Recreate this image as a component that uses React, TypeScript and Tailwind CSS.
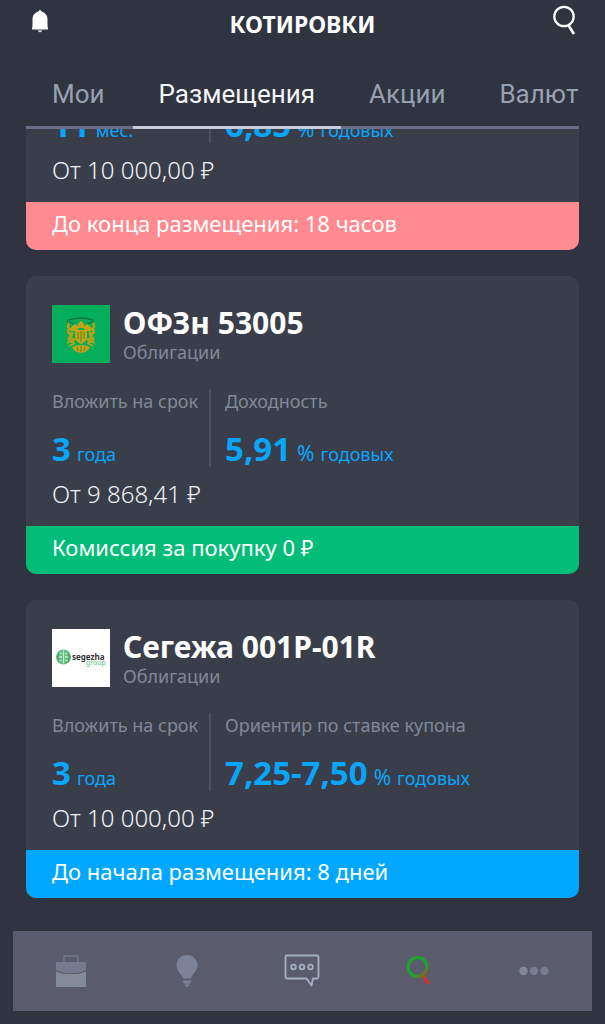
import type { ReactNode } from "react";

type Metric = { label?: string; value: string; percent?: boolean; unit: string };

type Placement = {
  id: string;
  logo?: ReactNode;
  title?: string;
  kind?: string;
  metrics: [Metric, Metric];
  price: string;
  banner: string;
  bannerColor: string;
};

function EagleLogo() {
  return (
    <svg viewBox="0 0 58 58" className="h-[58px] w-[58px] shrink-0" aria-hidden="true">
      <rect width="58" height="58" fill="#05ae5b" />
      <path d="M15 15.500 Q29 10.500 42 15.500 M15 16.500l7 2.500M42 16.500l-7 2.500" fill="none" stroke="#176c3d" strokeWidth="1.300" />
      <g fill="none" stroke="#b8a018" strokeWidth="2.400">
        <path d="M17 18c-2 3-1 6 3 7M18 23c-3 3-2 6 3 7M21 27c-4 3-3 7 2 8M17 32c-1 3 1 5 5 5" />
        <path d="M41 18c2 3 1 6-3 7M40 23c3 3 2 6-3 7M37 27c4 3 3 7-2 8M41 32c1 3-1 5-5 5" />
        <path d="M15 38l5-2M17 41l6-3M43 38l-5-2M41 41l-6-3" strokeWidth="1.800" />
      </g>
      <g fill="#c2a414">
        <path d="M26 19l3-3.500 3 3.500v4h-6z" />
        <path d="M19 22l4-3 4 3-2 4h-5z" />
        <path d="M39 22l-4-3-4 3 2 4h5z" />
        <path d="M23 25h12v8q-1 4-6 6-5-2-6-6z" />
        <path d="M20 42q9-4 18 0-2 5-9 6-7-1-9-6z" />
      </g>
      <path d="M26 27v7M29 26v11M32 27v7M25 42l1 4M29 41v6M33 42l-1 4" stroke="#5d8526" strokeWidth="1" />
    </svg>
  );
}

function SegezhaLogo() {
  return (
    <svg viewBox="0 0 58 58" className="h-[58px] w-[58px] shrink-0" aria-hidden="true">
      <rect width="58" height="58" fill="#ffffff" />
      <circle cx="11.500" cy="28" r="7.500" fill="#5fbd7f" />
      <path d="M11.500 21.500v13M7 24l3 1M7 28h3M7 32l3-1M16 24l-3 1M16 28h-3M16 32l-3-1" stroke="#c9edd3" strokeWidth="1.300" />
      <path d="M7 23q-3 5 0 10M16 23q3 5 0 10" fill="none" stroke="#3b9c5d" strokeWidth="1" />
      <text x="20" y="31" fontFamily="Noto Sans, sans-serif" fontSize="8" fontWeight="700" fill="#333333">segezha</text>
      <text x="34" y="36" fontFamily="Noto Sans, sans-serif" fontSize="7" fill="#65bd83">group</text>
    </svg>
  );
}

const placements: Placement[] = [
  {
    id: "ending",
    metrics: [
      { value: "11", unit: "мес." },
      { value: "6,85", percent: true, unit: "годовых" },
    ],
    price: "От 10 000,00 ₽",
    banner: "До конца размещения: 18 часов",
    bannerColor: "bg-[#ff8a8f]",
  },
  {
    id: "ofz",
    logo: <EagleLogo />,
    title: "ОФЗн 53005",
    kind: "Облигации",
    metrics: [
      { label: "Вложить на срок", value: "3", unit: "года" },
      { label: "Доходность", value: "5,91", percent: true, unit: "годовых" },
    ],
    price: "От 9 868,41 ₽",
    banner: "Комиссия за покупку 0 ₽",
    bannerColor: "bg-[#02bd77]",
  },
  {
    id: "segezha",
    logo: <SegezhaLogo />,
    title: "Сегежа 001P-01R",
    kind: "Облигации",
    metrics: [
      { label: "Вложить на срок", value: "3", unit: "года" },
      { label: "Ориентир по ставке купона", value: "7,25-7,50", percent: true, unit: "годовых" },
    ],
    price: "От 10 000,00 ₽",
    banner: "До начала размещения: 8 дней",
    bannerColor: "bg-[#02a8ff]",
  },
];

function MetricView({ metric }: { metric: Metric }) {
  return (
    <div className="flex h-[78px] flex-col justify-between whitespace-nowrap">
      <p className="h-6 text-lg leading-6 text-[#81889a]">{metric.label}</p>
      <p className="flex h-[38px] items-baseline gap-1.5 leading-10 text-[#08a6fb]">
        <span className="text-[33px] font-bold">{metric.value}</span>
        {metric.percent && <span className="text-[21px]">%</span>}
        <span className="text-lg leading-10">{metric.unit}</span>
      </p>
    </div>
  );
}

function PlacementCard({ item }: { item: Placement }) {
  return (
    <article className="overflow-hidden rounded-[10px] bg-[#3a3e4b]">
      {item.title && (
        <div className="flex gap-[13px] px-[26px] pt-[29px] pb-[26px]">
          {item.logo}
          <div className="h-[58px] min-w-0 whitespace-nowrap">
            <h2 className="text-[30px] leading-9 font-bold text-white">{item.title}</h2>
            <p className="text-lg leading-[22px] text-[#81889a]">{item.kind}</p>
          </div>
        </div>
      )}
      <div className="flex px-[26px]">
        <div className="w-[159px] shrink-0 border-r-2 border-[#4b5060]">
          <MetricView metric={item.metrics[0]} />
        </div>
        <div className="pl-[14px]">
          <MetricView metric={item.metrics[1]} />
        </div>
      </div>
      <p className="px-[26px] pt-[11px] pb-4 text-2xl leading-8 font-light text-[#f0f1f6]">{item.price}</p>
      <p className={`px-[26px] pt-[5px] pb-[11px] text-[22px] leading-8 text-white ${item.bannerColor}`}>{item.banner}</p>
    </article>
  );
}

function SearchIcon() {
  return (
    <svg viewBox="0 0 24 32" className="h-8 w-6" fill="none" stroke="white" strokeWidth="2.200" aria-hidden="true">
      <circle cx="11" cy="11.500" r="9.700" />
      <path d="M15.500 20.500l5.500 8.500" strokeWidth="2.600" />
    </svg>
  );
}

function BriefcaseIcon() {
  return (
    <svg viewBox="0 0 30 34" className="h-[34px] w-[30px]" aria-hidden="true">
      <path d="M8 8V2h14v6" fill="none" stroke="#717588" strokeWidth="1.500" />
      <path d="M0 8h30v8q-6 3-10 3H10q-4 0-10-3z" fill="#757a8e" />
      <path d="M0 17.500q6 2.500 10 2.500h10q4 0 10-2.500V33H0z" fill="#858a9b" />
    </svg>
  );
}

function BulbIcon() {
  return (
    <svg viewBox="0 0 22 34" className="h-[34px] w-[22px]" fill="#7c8398" aria-hidden="true">
      <path d="M11 1c6 0 10.500 4.500 10.500 10.500 0 6-5.500 8-6.500 13H7C6 19.500.500 17.500.500 11.500.500 5.500 5 1 11 1z" />
      <path d="M6.500 26.500h9l-1 3h-7zM8.500 30.500h5l-2.500 3z" />
    </svg>
  );
}

function ChatIcon() {
  return (
    <svg viewBox="0 0 36 34" className="h-[34px] w-9" fill="none" stroke="#a5afc4" strokeWidth="1.800" strokeLinejoin="round" aria-hidden="true">
      <path d="M3 1.500h30q1.500 0 1.500 1.500v20q0 1.500-1.500 1.500h-4l-1.500 7-5-7H3q-1.500 0-1.500-1.500V3Q1.500 1.500 3 1.500z" />
      <circle cx="9.500" cy="13" r="2.300" />
      <circle cx="18" cy="13" r="2.300" />
      <circle cx="26.500" cy="13" r="2.300" />
    </svg>
  );
}

function QuotesIcon() {
  return (
    <svg viewBox="0 0 24 30" className="h-[30px] w-6" fill="none" aria-hidden="true">
      <defs>
        <linearGradient id="quotes" x1="6" y1="6" x2="23" y2="26" gradientUnits="userSpaceOnUse">
          <stop offset="0.450" stopColor="#18a72b" />
          <stop offset="0.850" stopColor="#d82e20" />
        </linearGradient>
      </defs>
      <circle cx="11.500" cy="11" r="9.400" stroke="url(#quotes)" strokeWidth="3" />
      <path d="M17.500 19.500l4.500 8.500" stroke="url(#quotes)" strokeWidth="3.600" />
    </svg>
  );
}

function MoreIcon() {
  return (
    <svg viewBox="0 0 30 30" className="h-[30px] w-[30px]" fill="#787c90" aria-hidden="true">
      <circle cx="4.500" cy="15" r="4.200" fill="#83879a" />
      <circle cx="15" cy="15" r="4.200" />
      <circle cx="25.500" cy="15" r="4.200" />
    </svg>
  );
}

const tabs = ["Мои", "Размещения", "Акции", "Валюта"];

const navItems = [
  { label: "Портфель", icon: <BriefcaseIcon /> },
  { label: "Идеи", icon: <BulbIcon /> },
  { label: "Чат", icon: <ChatIcon /> },
  { label: "Котировки", icon: <QuotesIcon /> },
  { label: "Ещё", icon: <MoreIcon /> },
];

export default function App() {
  return (
    <div className="min-h-screen overflow-hidden bg-[#2f3440] font-['Noto_Sans',sans-serif]">
      <header className="flex h-[62px] items-start justify-between px-7 pt-1">
        <button type="button" aria-label="Уведомления" className="flex h-[34px] w-6 items-center justify-center">
          <svg viewBox="0 0 18 24" className="h-6 w-[18px]" fill="white" aria-hidden="true">
            <path d="M9 .500l1.500 2C14 3.500 16.500 6.500 16.500 10v7l.500 3v.500H1V20l.500-3v-7c0-3.500 2.500-6.500 6-7.500z" />
            <path d="M6.500 21.500h5L9 23.500z" />
          </svg>
        </button>
        <h1 className="text-[23px] leading-10 font-bold text-white">КОТИРОВКИ</h1>
        <button type="button" aria-label="Поиск" className="flex h-[34px] w-6 items-center justify-center">
          <SearchIcon />
        </button>
      </header>

      <main className="px-[26px]">
        <div role="tablist" className="flex gap-0.5 overflow-hidden font-[Roboto,sans-serif] text-[26px] whitespace-nowrap shadow-[inset_0_-3px_0_#6b6e88]">
          {tabs.map((tab, i) => (
            <button
              key={tab}
              type="button"
              role="tab"
              aria-selected={i === 1}
              className={`h-[67px] shrink-0 border-b-[3px] px-[26px] ${
                i === 1 ? "border-[#c9cad8] text-[#f4f5fa]" : "border-transparent text-[#9aa0b3]"
              }`}
            >
              {tab}
            </button>
          ))}
        </div>
        <div className="overflow-hidden">
          <div className="-mt-16 flex flex-col gap-[26px]">
            {placements.map((item) => (
              <PlacementCard key={item.id} item={item} />
            ))}
          </div>
        </div>
      </main>

      <nav className="mx-[13px] mt-[33px] mb-[13px] flex h-20 bg-[#5a5c6d]">
        {navItems.map((item) => (
          <button key={item.label} type="button" aria-label={item.label} className="flex flex-1 items-center justify-center">
            {item.icon}
          </button>
        ))}
      </nav>
    </div>
  );
}
